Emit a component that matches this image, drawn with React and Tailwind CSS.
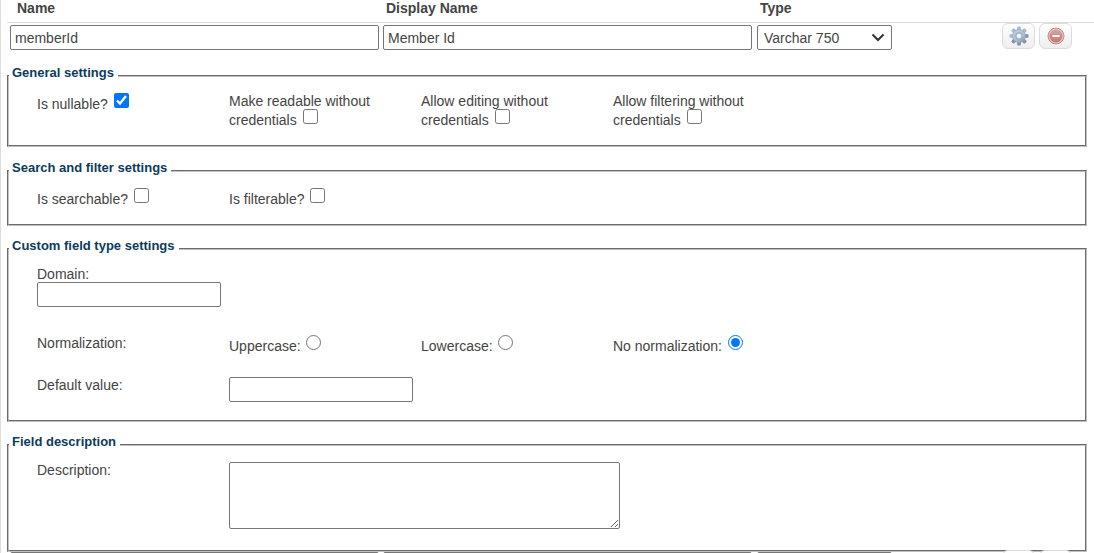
import React, { useState } from 'react';

const ROW_GRID = 'grid grid-cols-[373fr_374fr_135fr_202fr] pl-[10px]';
const FIELD = 'h-[25px] border border-[#767676] rounded-[2px] bg-white';

const TEETH = [0, 45, 90, 135, 180, 225, 270, 315];

const GearIcon = () => (
  <svg width="20" height="20" viewBox="0 0 20 20" aria-hidden="true">
    <defs>
      <linearGradient
        id="gear"
        gradientUnits="userSpaceOnUse"
        x1="4"
        y1="2"
        x2="16"
        y2="18"
      >
        <stop offset="0" stopColor="#c6d5e6" />
        <stop offset="0.6" stopColor="#abbccf" />
        <stop offset="1" stopColor="#7b8fa9" />
      </linearGradient>
      <mask id="gear-hole">
        <rect width="20" height="20" fill="#fff" />
        <circle cx="10" cy="10" r="2" fill="#000" />
      </mask>
    </defs>
    <g mask="url(#gear-hole)">
      {TEETH.map((angle) => (
        <path
          key={angle}
          d="M7.9 5l.3-4.2q1.8-.8 3.600 0L12.100 5z"
          fill={angle >= 90 && angle <= 225 ? '#8195af' : '#a9bbcf'}
          transform={`rotate(${angle} 10 10)`}
        />
      ))}
      <circle cx="10" cy="10" r="6.500" fill="url(#gear)" stroke="#92a5bc" strokeWidth="0.600" />
      <circle cx="10" cy="10" r="3.300" fill="#c3d1e1" stroke="#8ea1b9" strokeWidth="0.800" />
    </g>
  </svg>
);

const RemoveIcon = () => (
  <svg width="18" height="18" viewBox="0 0 18 18" aria-hidden="true">
    <defs>
      <linearGradient id="remove" x1="0" y1="0" x2="0" y2="1">
        <stop offset="0" stopColor="#dba3a3" />
        <stop offset="1" stopColor="#c67676" />
      </linearGradient>
    </defs>
    <circle cx="9" cy="9" r="8" fill="#e6c0c0" stroke="#c98d8d" strokeWidth="1" />
    <circle cx="9" cy="9" r="6.500" fill="url(#remove)" />
    <rect x="5.500" y="8" width="7" height="2" fill="#fff" />
  </svg>
);

const IconButton = ({ label, children }) => (
  <button
    type="button"
    aria-label={label}
    className="flex h-[26px] w-[33px] items-center justify-center rounded-[6px] border border-[#dcdcdc] bg-linear-to-b from-white to-[#eeeeee]"
  >
    {children}
  </button>
);

const FieldRow = ({ name, displayName, type }) => (
  <div className={`${ROW_GRID} items-start`}>
    <div className="pr-1">
      <input
        aria-labelledby="col-name"
        defaultValue={name}
        className={`${FIELD} block w-full px-[4px]`}
      />
    </div>
    <div className="pr-[5px]">
      <input
        aria-labelledby="col-display-name"
        defaultValue={displayName}
        className={`${FIELD} block w-full px-[4px]`}
      />
    </div>
    <div className="relative">
      <select
        aria-labelledby="col-type"
        defaultValue={type}
        className={`${FIELD} block w-full appearance-none px-[6px] pt-px`}
      >
        <option>{type}</option>
      </select>
      <svg
        className="pointer-events-none absolute top-[8px] right-[7px]"
        width="14"
        height="9"
        viewBox="0 0 14 9"
        fill="none"
        stroke="#333"
        strokeWidth="2"
        aria-hidden="true"
      >
        <path d="M1.500 1.500L7 7l5.500-5.500" />
      </svg>
    </div>
    <div className="-mt-[2px] flex justify-end gap-1 pr-[22px]">
      <IconButton label="Field settings">
        <GearIcon />
      </IconButton>
      <IconButton label="Remove field">
        <RemoveIcon />
      </IconButton>
    </div>
  </div>
);

const Section = ({ title, className, children }) => (
  <fieldset
    className={`mr-[7px] ml-[7px] border-2 border-[#c0c0c0] pl-7 [border-style:groove] ${className}`}
  >
    <legend className="-ml-7 pr-1 pb-[7px] pl-[3px] text-[13px] leading-[15px] font-bold text-[#0b3c5d]">
      {title}
    </legend>
    {children}
  </fieldset>
);

// label text followed by its checkbox or radio
const Toggle = ({ label, type = 'checkbox', ...props }) => (
  <label className="block w-[192px] pr-8">
    {label}{' '}
    <input type={type} className="ml-[2px] h-[15px] w-[15px] align-[1px]" {...props} />
  </label>
);

const App = () => {
  const [normalization, setNormalization] = useState('none');

  const radio = (value) => ({
    type: 'radio',
    name: 'normalization',
    checked: normalization === value,
    onChange: () => setNormalization(value),
  });

  return (
    <div className="h-screen overflow-hidden border-l border-[#dddddd] bg-white font-['Liberation_Sans',Arial,sans-serif] text-[14px] leading-4 text-[#444444]">
      <div className="-ml-px">
        <div className="ml-[7px] border-b border-[#dddddd]">
          <div className={`${ROW_GRID} -ml-[7px] h-[22px] font-bold`}>
            <span id="col-name" className="pl-[7px]">Name</span>
            <span id="col-display-name" className="pl-[3px]">Display Name</span>
            <span id="col-type" className="pl-[3px]">Type</span>
          </div>
        </div>

        <div className="pt-[2px]">
          <FieldRow name="memberId" displayName="Member Id" type="Varchar 750" />
        </div>

        <Section title="General settings" className="mt-[15px] pb-[17px]">
          <div className="flex pt-[6px]">
            <Toggle label="Is nullable?" defaultChecked />
            <Toggle label="Make readable without credentials" />
            <Toggle label="Allow editing without credentials" />
            <Toggle label="Allow filtering without credentials" />
          </div>
        </Section>

        <Section title="Search and filter settings" className="mt-[13px] pb-[17px]">
          <div className="flex pt-[6px]">
            <Toggle label="Is searchable?" />
            <Toggle label="Is filterable?" />
          </div>
        </Section>

        <Section title="Custom field type settings" className="mt-[12px] pb-[18px]">
          <div className="pt-[6px]">
            <label htmlFor="domain" className="block">Domain:</label>
            <input id="domain" className={`${FIELD} block w-[184px] px-[4px]`} />
          </div>
          <div className="flex pt-7">
            <span className="w-[192px]">Normalization:</span>
            <Toggle label="Uppercase:" {...radio('upper')} />
            <Toggle label="Lowercase:" {...radio('lower')} />
            <Toggle label="No normalization:" {...radio('none')} />
          </div>
          <div className="flex pt-[23px]">
            <label htmlFor="default-value" className="w-[192px]">Default value:</label>
            <input id="default-value" className={`${FIELD} w-[184px] px-[4px]`} />
          </div>
        </Section>

        <Section title="Field description" className="mt-[12px] pb-[21px]">
          <div className="flex pt-[6px]">
            <label htmlFor="description" className="w-[192px]">Description:</label>
            <textarea
              id="description"
              className="block h-[67px] w-[391px] rounded-[2px] border border-[#767676] bg-white px-[4px]"
            />
          </div>
        </Section>

        <FieldRow name="" displayName="" type="" />
      </div>
    </div>
  );
};

export default App;
